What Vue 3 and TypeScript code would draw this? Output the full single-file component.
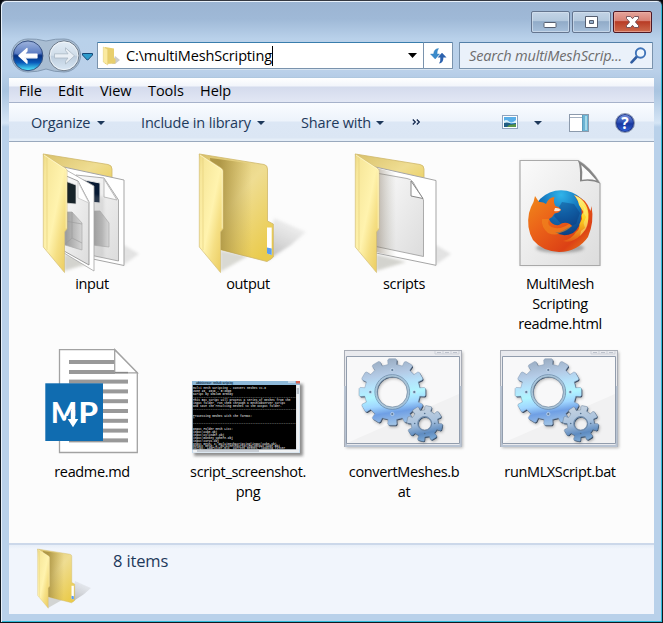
<script setup lang="ts">
interface FileItem {
  kind: 'input' | 'output' | 'scripts' | 'html' | 'md' | 'png' | 'bat'
  lines: string[]
}

const menus: string[] = ['File', 'Edit', 'View', 'Tools', 'Help']

const files: FileItem[] = [
  { kind: 'input', lines: ['input'] },
  { kind: 'output', lines: ['output'] },
  { kind: 'scripts', lines: ['scripts'] },
  { kind: 'html', lines: ['MultiMesh', 'Scripting', 'readme.html'] },
  { kind: 'md', lines: ['readme.md'] },
  { kind: 'png', lines: ['script_screenshot.', 'png'] },
  { kind: 'bat', lines: ['convertMeshes.b', 'at'] },
  { kind: 'bat', lines: ['runMLXScript.bat'] },
]

const consoleLines: [number, string][] = [
  [54, 'Multi Mesh Scripting - Convert Meshes v1.0'],
  [57, 'June 20, 2016 - 5:30pm'],
  [60, 'Script by Shalom Ormsby'],
  [63, '-----------------------------------------------------------'],
  [66, 'This Bat script will process a series of meshes from the'],
  [69, 'input folder, run them through a meshlabserver script'],
  [72, 'and save the resulting meshes to the output folder.'],
  [75, '-----------------------------------------------------------'],
  [82, 'Processing meshes with the format:'],
  [85, '*'],
  [89, '-----------------------------------------------------------'],
  [95, 'Input Folder Mesh List:'],
  [98, 'input\\cube.obj'],
  [101, 'input\\cylinder.obj'],
  [104, 'input\\monkey_sphere.obj'],
  [107, 'input\\torus.obj'],
  [110, 'Input mesh: C:\\multiMeshScripting\\input\\cube.obj'],
  [112.3, 'Output mesh: C:\\multiMeshScripting\\output\\cube.obj'],
  [114.3, 'Script: LabFilter.mlx, current meshes, loading filter'],
]

/** Outline of a cog: each tooth rises from the root circle to the tip circle. */
function gear(cx: number, cy: number, root: number, tip: number, hole: number, teeth: number, turn: number): string {
  const step = (Math.PI * 2) / teeth
  const pts: string[] = []
  const at = (r: number, a: number) => `${(cx + r * Math.cos(a)).toFixed(2)} ${(cy + r * Math.sin(a)).toFixed(2)}`
  for (let i = 0; i < teeth; i++) {
    const a = i * step + turn
    pts.push(at(root, a - step * 0.29), at(tip - 1, a - step * 0.27), at(tip, a - step * 0.19))
    pts.push(at(tip, a + step * 0.19), at(tip - 1, a + step * 0.27), at(root, a + step * 0.29))
  }
  return `M${pts.join('L')}ZM${cx - hole} ${cy}a${hole} ${hole} 0 1 0 ${hole * 2} 0a${hole} ${hole} 0 1 0 ${-hole * 2} 0Z`
}

const bigGear = gear(66.3, 58, 27.8, 33.4, 15.5, 12, -Math.PI / 2)
const smallGear = gear(98.7, 89.5, 13.6, 18, 6.5, 8, -1.35)
</script>

<template>
  <div class="window">
    <svg class="defs" width="0" height="0" aria-hidden="true">
      <defs>
        <linearGradient id="front" x1="0" y1="0" x2="1" y2="1">
          <stop offset="0" stop-color="#ecd880" /><stop offset=".12" stop-color="#f7e79a" />
          <stop offset=".5" stop-color="#fff3ae" /><stop offset=".7" stop-color="#f5df84" /><stop offset="1" stop-color="#e9c95b" />
        </linearGradient>
        <linearGradient id="rear" x1="0" y1="0" x2=".8" y2="1">
          <stop offset="0" stop-color="#d9c16a" /><stop offset=".5" stop-color="#efdd92" /><stop offset="1" stop-color="#eacb4c" />
        </linearGradient>
        <linearGradient id="rearShade" x1="50" y1="0" x2="82" y2="0" gradientUnits="userSpaceOnUse">
          <stop offset="0" stop-color="#a38b3b" stop-opacity=".8" /><stop offset="1" stop-color="#b49b45" stop-opacity="0" />
        </linearGradient>
        <linearGradient id="sheetShade" x1="50" y1="0" x2="70" y2="0" gradientUnits="userSpaceOnUse">
          <stop offset="0" stop-color="#7c6a55" stop-opacity=".5" /><stop offset="1" stop-color="#998" stop-opacity="0" />
        </linearGradient>
        <linearGradient id="castShade" x1="0" y1="1" x2="1" y2="0">
          <stop offset="0" stop-color="#777" stop-opacity=".75" /><stop offset="1" stop-color="#aaa" stop-opacity=".05" />
        </linearGradient>
        <linearGradient id="sheet" x1="0" y1="0" x2="1" y2="1">
          <stop offset="0" stop-color="#fbfbfb" /><stop offset="1" stop-color="#dcdcdc" />
        </linearGradient>
        <linearGradient id="box3d" x1="0" y1="0" x2="1" y2="0">
          <stop offset="0" stop-color="#999" /><stop offset="1" stop-color="#d5d5d5" />
        </linearGradient>
        <radialGradient id="globe" cx=".5" cy=".08" r=".85">
          <stop offset="0" stop-color="#30b4ea" /><stop offset=".4" stop-color="#1475bc" /><stop offset="1" stop-color="#0a2767" />
        </radialGradient>
        <linearGradient id="fox" x1="0" y1="0" x2="1" y2="1">
          <stop offset="0" stop-color="#f08a1b" /><stop offset=".35" stop-color="#ec6519" /><stop offset=".75" stop-color="#dc4115" /><stop offset="1" stop-color="#ef8a18" />
        </linearGradient>
        <linearGradient id="flame" x1="0" y1="0" x2="0" y2="1">
          <stop offset="0" stop-color="#fff28b" /><stop offset=".5" stop-color="#fdd51e" /><stop offset="1" stop-color="#e45a17" />
        </linearGradient>
        <linearGradient id="cog" x1=".3" y1="0" x2=".45" y2="1">
          <stop offset="0" stop-color="#98aabf" /><stop offset=".25" stop-color="#b4cbe6" /><stop offset=".4" stop-color="#b5e2fb" /><stop offset=".56" stop-color="#b0f5ff" />
          <stop offset=".7" stop-color="#a0d6ff" /><stop offset=".82" stop-color="#6f9fe4" /><stop offset="1" stop-color="#9fc3e6" />
        </linearGradient>
        <linearGradient id="cogSmall" x1=".2" y1="0" x2=".4" y2="1">
          <stop offset="0" stop-color="#c9d4e0" /><stop offset=".5" stop-color="#a9c2dd" /><stop offset=".8" stop-color="#5e8bc0" /><stop offset="1" stop-color="#7daad6" />
        </linearGradient>
        <filter id="soft" x="-30%" y="-30%" width="160%" height="160%"><feGaussianBlur stdDeviation="1.4" /></filter>
      </defs>
      <symbol id="folder-front" viewBox="0 0 156 128">
        <path d="M29.300 8L51.500 22.200Q53 23.300 53 25V83L50.500 86V126.500L29.300 101Z" fill="url(#front)" stroke="#d6c079" stroke-width=".7" />
        <path d="M33 11V104" stroke="#dcc46d" stroke-width=".7" opacity=".7" />
        <path d="M30 9L51 22.900Q52.200 23.800 52.200 25V82.500" fill="none" stroke="#fff8cc" stroke-width=".8" />
      </symbol>
      <symbol id="folder-open" viewBox="0 0 156 128">
        <path d="M50 100L97 112L104 72L136 86L121 99L98 114Z" fill="url(#castShade)" filter="url(#soft)" />
        <path d="M50 104L78 110L50 126Z" fill="#998" opacity=".35" filter="url(#soft)" />
        <path d="M29.300 8L94 18.500Q97.500 19.200 97.500 23V75L103.300 78V111L101 113L97 115.500L48 103Z" fill="url(#rear)" stroke="#cfb869" stroke-width=".8" />
        <path d="M40 12L85 18V113L48 103Z" fill="url(#rearShade)" />
        <path d="M97 81.500H101.700V109L97 107.500Z" fill="#fff" /><path d="M97 101.500L101.700 102.500V109L97 107.500Z" fill="#5c9df0" />
        <use href="#folder-front" width="156" height="128" />
      </symbol>
    </svg>

    <header class="titlebar">
      <div class="captions">
        <button class="cap" aria-label="Minimize"><svg width="38" height="22"><rect x="13" y="11.500" width="12" height="5" rx=".8" fill="#fff" stroke="#555e70" /></svg></button>
        <button class="cap" aria-label="Maximize"><svg width="38" height="22"><path fill-rule="evenodd" d="M13.500 5.500h12v11h-12zM17.500 9.500h4v3h-4z" fill="#fff" stroke="#555e70" /></svg></button>
        <button class="cap close" aria-label="Close"><svg width="38" height="22"><path d="M13.500 5.500h4l2 2.200 2-2.200h4v2l-3.100 3.500 3.100 3.500v2h-4l-2-2.200-2 2.200h-4v-2l3.100-3.500-3.100-3.500z" fill="#fff" stroke="#6b4b52" stroke-width=".9" /></svg></button>
      </div>
    </header>

    <nav class="address-row">
      <svg class="travel" width="86" height="36" viewBox="10 37 86 36">
        <defs>
          <linearGradient id="back" x1="0" y1="0" x2="0" y2="1"><stop offset="0" stop-color="#91a9d8" /><stop offset=".42" stop-color="#4168b9" /><stop offset=".5" stop-color="#08307f" /><stop offset=".72" stop-color="#0858b8" /><stop offset="1" stop-color="#54f1ff" /></linearGradient>
          <linearGradient id="fwd" x1="0" y1="0" x2="0" y2="1"><stop offset="0" stop-color="#e3edf6" /><stop offset=".48" stop-color="#d0dde9" /><stop offset=".52" stop-color="#bdcddd" /><stop offset="1" stop-color="#dae8f5" /></linearGradient>
        </defs>
        <path d="M28 39Q36 38.500 46 41Q56 38.500 64 39A16.500 16.500 0 0 1 64 72Q54 72 46 69Q38 72 28 72A16.500 16.500 0 0 1 28 39Z" fill="#a9bdd2" stroke="#8298b1" stroke-width="1" />
        <circle cx="28" cy="55.800" r="14.900" fill="url(#back)" stroke="#38517f" stroke-width="1" />
        <path d="M14.500 53Q15 42.500 28 42Q41 42.500 41.500 53Q34 57 28 56Q20 57 14.500 53Z" fill="#fff" opacity=".14" />
        <path d="M18.800 55.800L27 48.500V51L24.300 54H37V57.800H24.300L27 60.700V63.200Z" fill="#fff" stroke="#fff" stroke-width="1.200" stroke-linejoin="round" />
        <circle cx="64" cy="55.800" r="14.900" fill="url(#fwd)" stroke="#6b7887" stroke-width="1" />
        <circle cx="64" cy="55.800" r="13.900" fill="none" stroke="#fff" opacity=".6" />
        <path d="M74.500 55.800L65.500 47.800V50.500L68 53.800H54.500V58H68L65.500 61.200V64Z" fill="#e9eff5" stroke="#aab7c4" stroke-width=".8" stroke-linejoin="round" />
        <path d="M82.500 53.500H92.500V55L87.800 60H87.200L82.500 55Z" fill="#2e9bcb" stroke="#164878" />
      </svg>
      <div class="address">
        <svg class="mini" width="20" height="20" viewBox="0 0 20 20">
          <path d="M11 18L14 10L19 14L14 18Z" fill="#aaa" opacity=".6" />
          <path d="M4 1L13 2.500V12L14.500 13V17.500L4 18Z" fill="#e8cf6e" /><path d="M2.300 1L6.700 3.200V19L2.300 16Z" fill="#fbeaa0" stroke="#e1c873" stroke-width=".5" />
        </svg>
        <span class="path">C:\multiMeshScripting</span><i class="caret"></i>
        <svg class="drop" width="9" height="5"><path d="M0 0H9L4.500 5Z" fill="#000" /></svg>
      </div>
      <button class="refresh" aria-label="Refresh">
        <svg width="17" height="16" viewBox="0 0 17 16"><path d="M8.500 .5Q4 .8 3.600 6H.5L5.200 11L9.500 6H7Q6.800 3 8.500 .5Z" fill="#3a8bcb" stroke="#2d79b8" stroke-width=".4" /><path d="M9 15.500Q13.500 15 13.400 9.500H16.500L12 4.800L7.600 9.500H10.300Q10.800 13 9 15.500Z" fill="#2c62ae" /></svg>
      </button>
      <div class="search">
        <span>Search multiMeshScrip...</span>
        <svg width="17" height="17" viewBox="0 0 17 17"><path d="M1.500 15.300L7 9.500" stroke="#315da0" stroke-width="2.600" stroke-linecap="round" /><circle cx="10.500" cy="6" r="4.700" fill="#eef6fd" stroke="#3f73b8" stroke-width="1.900" /></svg>
      </div>
    </nav>

    <main class="client">
      <div class="menubar"><span v-for="m in menus" :key="m" :class="m.toLowerCase()">{{ m }}</span></div>
      <div class="toolbar">
        <span class="cmd organize">Organize</span>
        <span class="cmd include">Include in library</span>
        <span class="cmd share">Share with</span>
        <svg class="more" width="9" height="6"><path d="M.8.500L3.300 3L.8 5.500M4.800 .500L7.300 3L4.800 5.500" fill="none" stroke="#14294f" stroke-width="1.300" /></svg>
        <svg class="preview" width="16" height="14"><rect x=".5" y=".5" width="15" height="13" fill="#fff" stroke="#8fa3bd" /><rect x="2" y="2" width="12" height="10" fill="#5aafe8" /><path d="M2 6Q4 4 7 6.500T14 5V8H2Z" fill="#d8f0fb" /><path d="M2 8Q6 6.500 9 9L14 8V12H2Z" fill="#205c83" /><path d="M7 10L14 9V12H5Z" fill="#5b9848" /></svg>
        <svg class="tri" width="8" height="4"><path d="M0 0H8L4 4Z" fill="#1e395b" /></svg>
        <svg class="pane" width="20" height="18"><rect x=".5" y=".5" width="19" height="17" fill="#fff" stroke="#8c9aac" /><path d="M1 3.500H13" stroke="#a4b0c0" /><rect x="13" y="1" width="6" height="16" fill="#6bb4d4" /><path d="M13.500 1V17" stroke="#5c9dbd" /><path d="M17 2V16" stroke="#a6d9ea" stroke-width="2" /></svg>
        <span class="help-icon">?</span>
      </div>

      <section class="files">
        <figure v-for="(f, i) in files" :key="i">
          <svg v-if="f.kind === 'output'" class="icon" viewBox="0 0 156 128"><use href="#folder-open" width="156" height="128" /></svg>

          <svg v-else-if="f.kind === 'input' || f.kind === 'scripts'" class="icon" viewBox="0 0 156 128">
            <path d="M108 98L125 108L108 120Z" fill="#999" opacity=".25" filter="url(#soft)" />
            <path d="M50 108L80 116L50 125Z" fill="#776" opacity=".3" filter="url(#soft)" />
            <path d="M29.300 8L94 18.500Q98 19.200 98 23V60H40Z" fill="url(#rear)" stroke="#cfb869" stroke-width=".8" />
            <template v-if="f.kind === 'scripts'">
              <path d="M45 20L110 34.500V119.300L50 107Z" fill="#fff" stroke="#a5a5a5" />
              <path d="M50 27L81 32.500Q85 33 87 36L97.500 54V110.500L50 100.500Z" fill="url(#sheet)" stroke="#999" stroke-width=".8" />
              <path d="M85 35V50L97 52.500Z" fill="#fff" stroke="#888" stroke-width="1" />
              <path d="M50 22L75 28V112L50 106Z" fill="url(#sheetShade)" />
            </template>
            <template v-else>
              <path d="M45 20L110 34V119.500L50 107Z" fill="#fff" stroke="#a5a5a5" />
              <path d="M62 29L90 32L104.500 54V115L62 106Z" fill="url(#sheet)" stroke="#999" stroke-width=".8" />
              <path d="M90 33V51L103 54Z" fill="#fcfcfc" stroke="#bbb" />
              <path d="M60 32L86 37V57L75 56Z" fill="#081a34" stroke="#e2e2e2" />
              <path d="M78 65L86 65L95 77V101L78 99Z" fill="url(#box3d)" stroke="#aaa" stroke-width=".7" />
              <path d="M78 49L90 51V112H78Z" fill="#999" opacity=".22" filter="url(#soft)" />
              <path d="M47 21L80 40V125L50 107Z" fill="#fff" stroke="#a5a5a5" stroke-width=".8" />
              <path d="M50 29L64 35L75 56V119L50 105Z" fill="url(#sheet)" stroke="#888" stroke-width=".8" />
              <path d="M51 35L62 39V58L51 57Z" fill="#172329" stroke="#ddd" stroke-width=".7" />
              <path d="M64 36V52L75 57Z" fill="#fff" stroke="#c6c6c6" stroke-width=".8" />
              <path d="M51 66L58 66L68 77V104L51 99Z" fill="url(#box3d)" stroke="#aaa" stroke-width=".7" />
              <path d="M58 66V92L68 97M58 92L51 98M51 75L68 78" fill="none" stroke="#999" stroke-width=".6" />
            </template>
            <use href="#folder-front" width="156" height="128" />
          </svg>

          <svg v-else-if="f.kind === 'html'" class="icon" viewBox="0 0 156 128">
            <path d="M38.200 14.200H96L118 37V120H38.200Z" fill="#bbb" opacity=".4" filter="url(#soft)" />
            <path d="M38 14.500H96Q108 21 118 37.500V119.500H38Z" fill="url(#sheet)" stroke="#a9a9a9" stroke-width="1.200" />
            <path d="M96 14.500Q98.500 20 98 35.500Q110 33.500 118 37.500Q108 21 96 14.500Z" fill="#858585" />
            <path d="M99.300 19Q101 26 100 33.700Q108 32.500 114.500 34.500Q107 25.500 99.300 19Z" fill="#fafafa" />
            <ellipse cx="78" cy="102" rx="24" ry="5" fill="#666" opacity=".5" filter="url(#soft)" />
            <circle cx="79" cy="73.500" r="29.300" fill="url(#globe)" />
            <path d="M80 56L92 58L98 67L94 78L83 82L72 70Z" fill="#082f73" opacity=".35" />
            <path d="M92 49Q104 52 108.500 65L109.500 60Q112.500 76 106 91Q96 105.500 77 106Q60 105 51 94Q44 82 47 67Q49 60 51.500 56L53 50L57 56Q61 55.500 64 58Q67 51 72.500 51Q71 56 73.500 60Q78 61 79 64Q77 67 72.500 67.500Q71 71 67 73Q70 80 77 79Q82 75 88 78L90 80Q85 82 82 84Q77 87 73 86Q81 92 91 87Q99 81 99 71Q102 63 92 49Z" fill="url(#fox)" />
            <path d="M92 49Q105 54 106.500 68Q107 86 92 94Q86 97 81 95Q90 93 94 86Q98 83 97.500 78L100 73L99.500 69L101.500 66L97 59Q96 53 92 49Z" fill="url(#flame)" />
            <path d="M96 54L102 62L101.500 67L104 71L101.500 77L103 82L99 85L98 90L104 83Q108 75 105 64Z" fill="#fff2a0" opacity=".4" />
            <path d="M73 62Q77 61.500 79 64Q76 66 72 65Z" fill="#fbe3d2" />
            <path d="M60 73Q59 81 66 87Q73 90 78 87Q85 85 90 80L87 78Q80 83 73 82Q64 81 67 73Z" fill="#f18b1e" opacity=".6" />
          </svg>

          <svg v-else-if="f.kind === 'md'" class="icon" viewBox="0 0 156 128">
            <path d="M45.500 15.700H100.700L123.300 38.800V118.500H45.500Z" fill="#fff" stroke="#a2a2a2" stroke-width="1.300" />
            <g fill="#999"><rect x="55" y="26" width="46" height="4" /><rect x="55" y="36" width="46" height="4" /><rect v-for="n in 7" :key="n" x="55" :y="35.800 + n * 9.800" width="59" height="4" /></g>
            <path d="M100.700 15.700V38.800H123.300Z" fill="#fff" stroke="#a2a2a2" stroke-width="1.300" />
            <path d="M100.700 38.600H114" stroke="#888" stroke-width="1.500" />
            <rect x="31.300" y="49.300" width="57.700" height="57.700" fill="#106cb0" />
            <text class="mp" x="37" y="88.500" textLength="26" lengthAdjust="spacingAndGlyphs">M</text>
            <text class="mp" x="64.500" y="88.500" textLength="19.500" lengthAdjust="spacingAndGlyphs">P</text>
            <path d="M52.500 82H65V90H52.500Z" fill="#106cb0" /><path d="M56.800 76H61.200V85H64.300L59 93.300L53.700 85H56.800Z" fill="#fff" />
          </svg>

          <svg v-else-if="f.kind === 'png'" class="icon" viewBox="0 0 156 128">
            <rect x="24" y="50" width="109" height="72" fill="#555" opacity=".65" filter="url(#soft)" />
            <rect x="22" y="47" width="108" height="72" fill="#c8dced" />
            <rect x="22" y="47" width="108" height="4" fill="#8eb9d9" /><rect x="126" y="47" width="4" height="2.500" fill="#d96654" />
            <rect x="118" y="47" width="7" height="2" fill="#c2d8ea" />
            <rect x="22.700" y="51" width="103.500" height="64.500" fill="#000" />
            <rect x="126.200" y="51" width="3.200" height="64.500" fill="#f0f2f4" /><rect x="126.600" y="54" width="2.400" height="6" fill="#bbc2ca" />
            <text x="26" y="50" class="tiny title" textLength="37">Administrator: MeshLab Scripting</text>
            <text v-for="[y, t] in consoleLines" :key="y" x="23" :y="y + 1" class="tiny" :textLength="t.length * 1.74">{{ t }}</text>
            <rect x="23" y="115.500" width="106" height="3" fill="#eff1f3" /><rect x="27" y="116" width="62" height="2" fill="#c8cdd4" />
          </svg>

          <svg v-else class="icon" viewBox="0 0 156 128">
            <rect x="20" y="18" width="117" height="96" fill="#888" opacity=".6" filter="url(#soft)" />
            <rect x="18.500" y="16.500" width="117" height="96" fill="#e9eaee" stroke="#a9adb6" />
            <path d="M19 52L20 112H134.500V52" fill="none" stroke="#b8c3d2" stroke-width="2" />
            <path d="M20.500 22.500H133.500V109.500H20.500Z" fill="#f1f1f2" stroke="#929dad" />
            <path d="M21 23H133V60L21 109Z" fill="#fff" opacity=".5" />
            <path d="M109 17v3h24v-3M117 17v3M125 17v3" fill="none" stroke="#cdd1d9" /><path d="M111 18.500h4M119 18.500h4M127 18.500h4" stroke="#bcc1cb" />
            <path :d="bigGear" transform="translate(1.500 2)" fill="#555" fill-rule="evenodd" opacity=".45" filter="url(#soft)" />
            <path :d="bigGear" transform="translate(.8 1)" fill="#34465e" fill-rule="evenodd" />
            <path :d="bigGear" fill="url(#cog)" fill-rule="evenodd" stroke="#8299b3" stroke-width=".5" stroke-linejoin="round" />
            <circle cx="66.300" cy="58" r="16" fill="none" stroke="#a9c4d8" stroke-width="1.800" /><circle cx="66.300" cy="58" r="17.400" fill="none" stroke="#6e8ba8" stroke-width=".8" /><circle cx="66.300" cy="58" r="15.100" fill="none" stroke="#7088a0" stroke-width=".7" />
            <g fill="#64809e" stroke="#deefff" stroke-width=".6"><circle cx="66.300" cy="36" r="1.600" /><circle cx="66.300" cy="80" r="1.600" /><circle cx="44.300" cy="58" r="1.600" /><circle cx="88.300" cy="58" r="1.600" /></g>
            <path :d="smallGear" transform="translate(1.300 1.800)" fill="#555" fill-rule="evenodd" opacity=".5" filter="url(#soft)" />
            <path :d="smallGear" transform="translate(.6 .8)" fill="#27415f" fill-rule="evenodd" />
            <path :d="smallGear" fill="url(#cogSmall)" fill-rule="evenodd" stroke="#6c849f" stroke-width=".5" />
            <circle cx="98.700" cy="89.500" r="7" fill="none" stroke="#6a86a6" stroke-width=".9" />
            <g fill="#53718f"><circle cx="98.700" cy="79.500" r=".8" /><circle cx="98.700" cy="99.500" r=".8" /><circle cx="88.700" cy="89.500" r=".8" /><circle cx="108.700" cy="89.500" r=".8" /></g>
          </svg>
          <figcaption><span v-for="l in f.lines" :key="l">{{ l }}</span></figcaption>
        </figure>
      </section>

      <footer class="details">
        <svg width="78" height="64" viewBox="0 0 156 128"><use href="#folder-open" width="156" height="128" /></svg>
        <span>8 items</span>
      </footer>
    </main>
  </div>
</template>

<style>
body { margin: 0; background: #05070d; }
</style>

<style scoped>
.window { box-sizing: border-box; width: 663px; height: 623px; border: 1px solid #101820; border-top-color: #343841; border-radius: 6px 6px 0 0; padding: 0 7px 7px; overflow: hidden; background: linear-gradient(#9bb4d2 0, #9fb9d7 18px, #b9d1ea 38px, #bad0e9 70px, #a9c4e0 90px, #d5e5f5 122px, #b9d1ea 126px, #b9d1ea 100%); box-shadow: inset 1px 1px 0 #e8f1fb, inset -1px -1px 0 #30bad8; font: 14.500px/20px "Open Sans", "Noto Sans", sans-serif; color: #000; }
.defs { display: block; width: 0; height: 0; }
button { padding: 0; margin: 0; display: block; font: inherit; }
.titlebar { height: 36px; display: flex; justify-content: flex-end; padding: 10px 3px 0 0; box-sizing: border-box; }
.captions { display: flex; gap: 2px; height: 22px; }
.cap { box-sizing: border-box; width: 39px; height: 22px; border: 1px solid #64758f; border-radius: 2px; background: linear-gradient(#c3d4e6 0, #b3c8dd 45%, #91abc8 48%, #a6bfda 100%); box-shadow: inset 0 0 0 1px #d6e3f0aa; }
.cap svg { display: block; margin: -1px; }
.close { border-color: #4d1825; background: linear-gradient(#e5a49b 0, #d88174 45%, #b83b25 48%, #cc6a4d 100%); box-shadow: inset 0 0 0 1px #edb2a7aa; }
.address-row { height: 40px; display: flex; align-items: flex-start; padding-left: 2px; }
.travel { flex: none; }
.address, .refresh, .search { box-sizing: border-box; height: 27px; margin-top: 5px; border: 1px solid #7a93ad; border-top-color: #527fa8; border-radius: 1px; background: #fff; box-shadow: 0 1px 0 #d8e5f2; }
.address { width: 327px; margin-left: 1px; border-top-color: #397dac; display: flex; align-items: center; padding: 0 6px 0 3px; }
.mini { margin-right: 5px; }
.path { letter-spacing: -.15px; }
.caret { width: 1px; height: 20px; background: #000; }
.drop { margin-left: auto; }
.refresh { width: 30px; margin-left: -1px; display: grid; place-items: center; }
.search { width: 194px; margin-left: 6px; padding: 0 5px 0 9px; display: flex; align-items: center; justify-content: space-between; background: #eaf1fa; color: #6d6d6d; font-style: italic; }
.search span { letter-spacing: -.16px; white-space: nowrap; }
.client { width: 645px; margin-left: 1px; height: 537px; background: #fcfcfc; }
.menubar { box-sizing: border-box; height: 26px; padding: 3px 0 0 10px; display: flex; border-bottom: 1px solid #a6b2ca; border-top: 1px solid #aec7df; background: linear-gradient(#fff 0, #f2f5fb 8px, #d4dbed 9px, #e2e7f4 100%); }
.menubar span { width: 42px; letter-spacing: -.05px; }
.menubar .file { width: 39px; }
.menubar .view { width: 48px; }
.menubar .tools { width: 52px; }
.toolbar { box-sizing: border-box; height: 39px; display: flex; align-items: center; padding: 1px 0 0 22px; border-bottom: 1px solid #99a9bd; background: linear-gradient(#fafcff 0, #edf3fb 18px, #dce7f5 19px, #dbe6f4 35px, #e5eef8 36px); color: #1e395b; }
.cmd { display: flex; align-items: center; justify-content: space-between; box-sizing: border-box; white-space: nowrap; letter-spacing: -.17px; }
.cmd::after { content: ""; border: 4px solid transparent; border-top-color: #1e395b; border-bottom: 0; }
.organize { width: 74px; margin-right: 36px; }
.include { width: 124px; margin-right: 36px; }
.share { width: 83px; }
.more { margin: 0 0 2px 28px; }
.preview { margin: 0 0 2px 81px; }
.tri { margin-left: 16px; }
.pane { margin-left: 27px; }
.help-icon { box-sizing: border-box; width: 20px; height: 20px; margin-left: 26px; border: 1px solid #8c97ad; border-radius: 50%; background: linear-gradient(#7f9ae0, #2d50b5 45%, #1838a0 55%, #3465dc); box-shadow: inset 0 0 0 1px #22388a; color: #fff; font-size: 15.500px; font-weight: 700; line-height: 18px; text-align: center; }
.files { box-sizing: border-box; height: 401px; padding: 4px 0 0 5px; display: grid; grid-template-columns: repeat(4, 156px); grid-auto-rows: 188px; background: #fcfcfc; }
figure { margin: 0; }
.icon { display: block; width: 156px; height: 128px; }
figcaption { display: flex; flex-direction: column; align-items: center; letter-spacing: -.36px; white-space: nowrap; }
.mp { font: 900 28.500px Lato, sans-serif; fill: #fff; }
.tiny { font: 700 2.900px "Liberation Mono", monospace; fill: #c4c4c4; }
.title { fill: #23445f; }
.details { box-sizing: border-box; height: 71px; border-top: 2px solid #ccd8ea; background: linear-gradient(#e7eef8, #f1f5fc 4px); display: flex; padding: 0 0 0 14px; color: #1e395b; font-size: 16.500px; }
.details span { margin: 6px 0 0 12px; letter-spacing: -.15px; }
</style>
